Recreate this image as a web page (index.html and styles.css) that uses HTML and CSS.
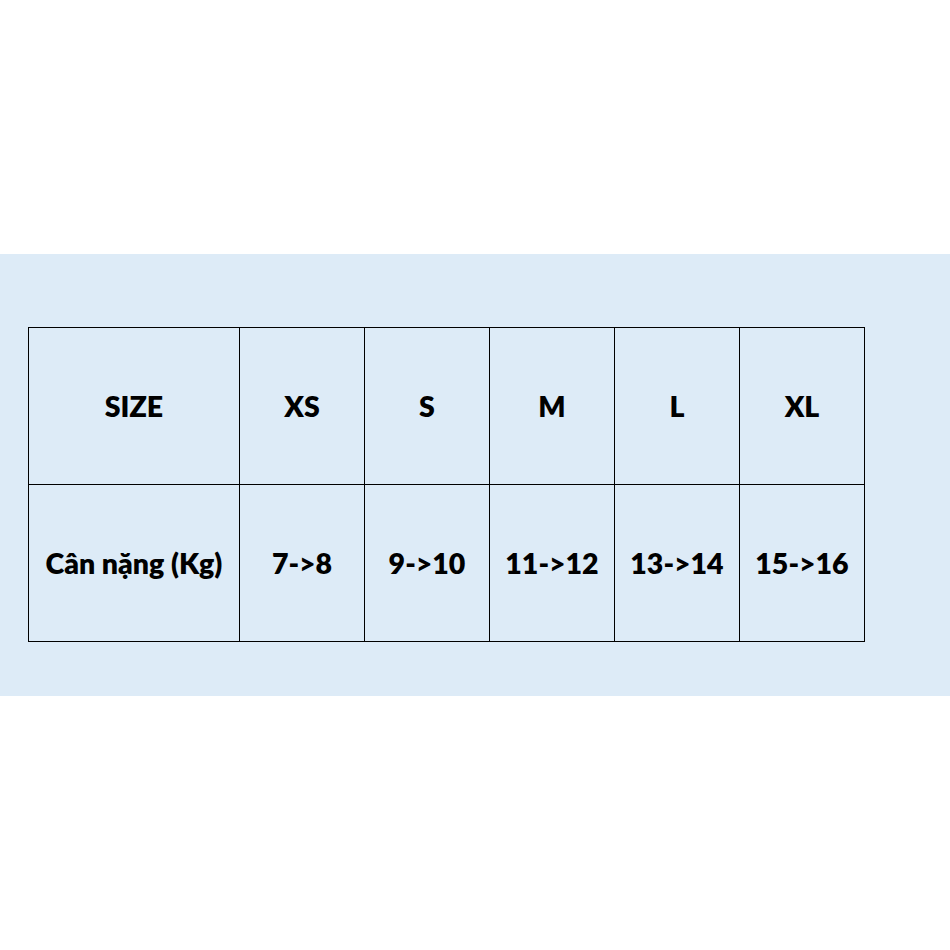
FILE: index.html
```html
<!DOCTYPE html>
<html lang="vi">
<head>
<meta charset="utf-8">
<title>Size</title>
<link rel="stylesheet" href="styles.css">
</head>
<body>
<div class="band">
  <div class="grid">
    <div class="cell">SIZE</div>
    <div class="cell">XS</div>
    <div class="cell">S</div>
    <div class="cell">M</div>
    <div class="cell">L</div>
    <div class="cell">XL</div>
    <div class="cell">Cân nặng (Kg)</div>
    <div class="cell">7-&gt;8</div>
    <div class="cell">9-&gt;10</div>
    <div class="cell">11-&gt;12</div>
    <div class="cell">13-&gt;14</div>
    <div class="cell">15-&gt;16</div>
  </div>
</div>
</body>
</html>
```
FILE: styles.css
```css
html, body {
  margin: 0;
  padding: 0;
  background: #ffffff;
}
body {
  width: 950px;
  height: 950px;
  font-family: Lato, "Open Sans", sans-serif;
}
.band {
  margin-top: 254px;
  height: 442px;
  box-sizing: border-box;
  padding: 73px 0 0 28px;
  background: #ddebf7;
}
.grid {
  display: grid;
  grid-template-columns: 210px repeat(5, 124px);
  grid-template-rows: 156px 156px;
  gap: 1px;
  padding: 1px;
  background: #000;
  width: max-content;
}
.cell {
  background: #ddebf7;
  display: flex;
  align-items: center;
  justify-content: center;
  font-weight: 800;
  font-size: 28.5px;
  color: #000;
}
```
